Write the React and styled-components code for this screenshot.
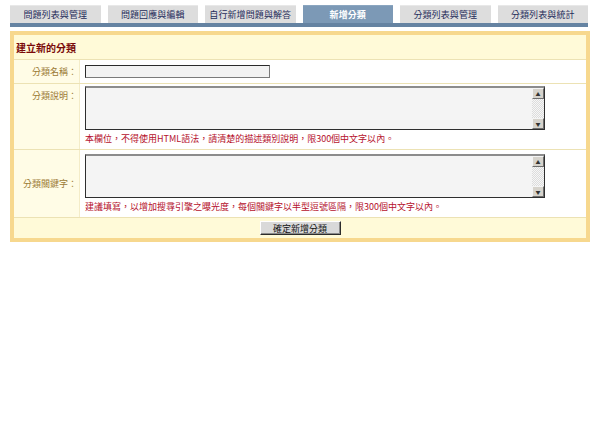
import React from 'react';
import styled, { createGlobalStyle } from 'styled-components';

const GlobalStyle = createGlobalStyle`
  html, body {
    margin: 0;
    padding: 0;
    background: #ffffff;
    font-family: "Noto Sans CJK TC", "Noto Sans CJK SC", "Liberation Sans", sans-serif;
  }
`;

const Page = styled.div`
  width: 600px;
  height: 436px;
  padding: 5px 10px 0 10px;
  box-sizing: border-box;
`;

const TabBar = styled.div`
  display: flex;
  gap: 7px;
  height: 18px;
  border-bottom: 4px solid #6583a2;
  margin-right: 2px;
`;

const Tab = styled.div`
  flex: 1;
  display: flex;
  align-items: center;
  justify-content: center;
  font-size: 9px;
  letter-spacing: 0.1px;
  background: ${({ $active }) => ($active ? '#7c99b6' : '#dddddd')};
  color: ${({ $active }) => ($active ? '#ffffff' : '#1f2c5a')};
  font-weight: ${({ $active }) => ($active ? 700 : 400)};
  border-top: 1px solid ${({ $active }) => ($active ? '#8ba6c0' : '#e8e8e8')};
  box-sizing: border-box;
`;

const Panel = styled.div`
  margin-top: 4px;
  border: 4px solid #f7d88e;
  background: #ffffff;
`;

const TitleRow = styled.div`
  height: 24px;
  display: flex;
  align-items: center;
  padding-left: 2px;
  background: #fffad8;
  color: #7a0a0a;
  font-weight: 700;
  font-size: 10px;
`;

const FormRow = styled.div`
  display: grid;
  grid-template-columns: 66px 1fr;
  border-top: 1px solid #ece2b4;
  min-height: ${({ $h }) => $h}px;
`;

const Label = styled.div`
  background: #fffce6;
  border-right: 1px solid #f4ecc8;
  color: #9b7a34;
  font-size: 9px;
  display: flex;
  justify-content: flex-end;
  align-items: ${({ $top }) => ($top ? 'flex-start' : 'center')};
  padding: ${({ $top }) => ($top ? '5px 2px 0 0' : '0 2px 0 0')};
`;

const Field = styled.div`
  display: flex;
  flex-direction: column;
  justify-content: ${({ $center }) => ($center ? 'center' : 'flex-start')};
  padding: ${({ $pt }) => $pt || 0}px 0 0 5px;
`;

const TextInput = styled.input`
  width: 185px;
  height: 13px;
  box-sizing: border-box;
  background: #f2f2f2;
  border: 1px solid #2a2a2a;
  border-right-color: #7a7a7a;
  border-bottom-color: #7a7a7a;
  padding: 0;
  outline: none;
`;

const AreaBox = styled.div`
  width: 460px;
  height: 44px;
  box-sizing: border-box;
  display: flex;
  border: 1px solid #2e2e2e;
  border-top-color: #8c8c8c;
  border-top-width: 2px;
  background: #f4f4f4;
`;

const Area = styled.textarea`
  flex: 1;
  border: none;
  background: transparent;
  resize: none;
  outline: none;
  padding: 0;
`;

const Scroll = styled.div`
  width: 12px;
  display: flex;
  flex-direction: column;
  background-color: #ececec;
  background-image: repeating-conic-gradient(#dcdcdc 0 25%, #f6f6f6 0 50%);
  background-size: 2px 2px;
`;

const ScrollBtn = styled.div`
  height: 11px;
  background: #d6d3cc;
  border: 1px solid;
  border-color: #f4f4f4 #6e6e6e #6e6e6e #f4f4f4;
  box-sizing: border-box;
  display: flex;
  align-items: center;
  justify-content: center;
  font-size: 5px;
  line-height: 1;
  color: #333;
`;

const Track = styled.div`
  flex: 1;
`;

const Note = styled.div`
  color: #b5102c;
  font-size: 9px;
  height: 17px;
  display: flex;
  align-items: center;
`;

const ButtonRow = styled.div`
  border-top: 1px solid #ece2b4;
  height: 20px;
  background: #fffad8;
  display: flex;
  align-items: center;
  justify-content: center;
`;

const Submit = styled.button`
  width: 81px;
  height: 14px;
  padding: 0;
  font-family: inherit;
  font-size: 9px;
  line-height: 1;
  color: #111;
  background: #d9d9d9;
  border: 1px solid;
  border-color: #ffffff #2c2c2c #2c2c2c #ffffff;
  box-shadow: inset -1px -1px 0 #8a8a8a;
`;

const TextArea = () => (
  <AreaBox>
    <Area />
    <Scroll>
      <ScrollBtn>▲</ScrollBtn>
      <Track />
      <ScrollBtn>▼</ScrollBtn>
    </Scroll>
  </AreaBox>
);

const tabs = ['問題列表與管理', '問題回應與編輯', '自行新增問題與解答', '新增分類', '分類列表與管理', '分類列表與統計'];

export default function App() {
  return (
    <Page>
      <GlobalStyle />
      <TabBar>
        {tabs.map((t, i) => (
          <Tab key={t} $active={i === 3}>{t}</Tab>
        ))}
      </TabBar>
      <Panel>
        <TitleRow>建立新的分類</TitleRow>
        <FormRow $h={23}>
          <Label>分類名稱：</Label>
          <Field $center>
            <TextInput />
          </Field>
        </FormRow>
        <FormRow $h={65}>
          <Label $top>分類說明：</Label>
          <Field $pt={2}>
            <TextArea />
            <Note>本欄位，不得使用HTML語法，請清楚的描述類別說明，限300個中文字以內。</Note>
          </Field>
        </FormRow>
        <FormRow $h={67}>
          <Label>分類關鍵字：</Label>
          <Field $pt={4}>
            <TextArea />
            <Note>建議填寫，以增加搜尋引擎之曝光度，每個關鍵字以半型逗號區隔，限300個中文字以內。</Note>
          </Field>
        </FormRow>
        <ButtonRow>
          <Submit>確定新增分類</Submit>
        </ButtonRow>
      </Panel>
    </Page>
  );
}
